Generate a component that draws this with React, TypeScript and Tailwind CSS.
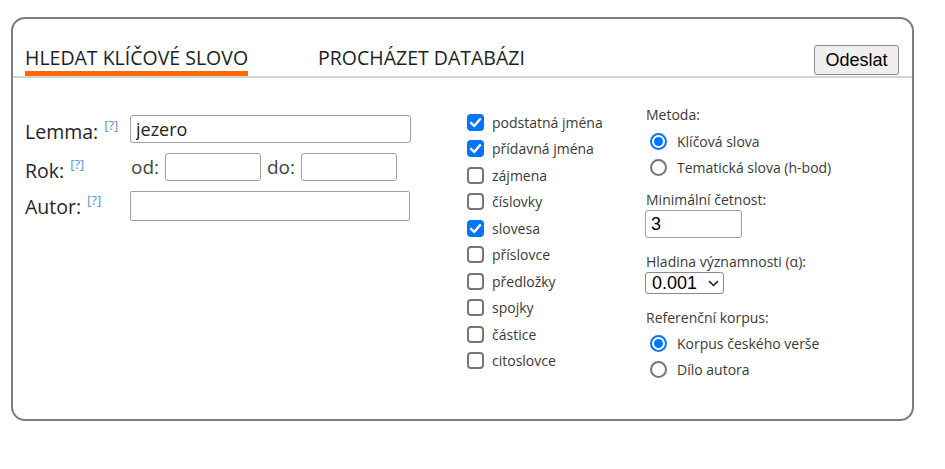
import React from "react";

const OS = { fontFamily: '"Open Sans", "Noto Sans", sans-serif' };

function Help() {
  return (
    <sup className="relative -top-[9px] ml-[6px] text-[13px] font-normal leading-none text-[#5a92d2]">[?]</sup>
  );
}

function CheckMark() {
  return (
    <svg width="17" height="17" viewBox="0 0 17 17" className="block">
      <path d="M4 8.8 L7.2 12 L13 5.2" fill="none" stroke="white" strokeWidth="2.4" strokeLinecap="round" strokeLinejoin="round" />
    </svg>
  );
}

function Check({ label, checked }: { label: string; checked?: boolean }) {
  return (
    <label className="flex h-[26.5px] items-center">
      {checked ? (
        <span className="h-[17px] w-[17px] rounded-[4px] bg-[#0075ff]">
          <CheckMark />
        </span>
      ) : (
        <span className="h-[17px] w-[17px] rounded-[4px] border-2 border-[#767676] bg-white" />
      )}
      <span className="ml-[8px] text-[14px] text-[#3a3a3a]">{label}</span>
    </label>
  );
}

function Radio({ label, checked }: { label: string; checked?: boolean }) {
  return (
    <label className="flex h-[26px] items-center pl-[5px]">
      {checked ? (
        <span className="flex h-[17px] w-[17px] items-center justify-center rounded-full border-2 border-[#0075ff] bg-white">
          <span className="h-[9px] w-[9px] rounded-full bg-[#0075ff]" />
        </span>
      ) : (
        <span className="h-[17px] w-[17px] rounded-full border-2 border-[#767676] bg-white" />
      )}
      <span className="ml-[10px] text-[14px] text-[#3a3a3a]">{label}</span>
    </label>
  );
}

export default function App() {
  const pos = [
    ["podstatná jména", true],
    ["přídavná jména", true],
    ["zájmena", false],
    ["číslovky", false],
    ["slovesa", true],
    ["příslovce", false],
    ["předložky", false],
    ["spojky", false],
    ["částice", false],
    ["citoslovce", false],
  ] as const;

  return (
    <div className="h-[469px] w-[945px] bg-white pl-[11px] pt-[17px]" style={OS}>
      <div className="h-[404px] w-[903px] rounded-[14px] border-2 border-[#7d7d7d]">
        {/* header */}
        <div className="flex h-[59px] items-end border-b-2 border-[#d4d4d4] pl-[12px] pr-[13px]">
          <div className="border-b-[5px] border-[#ff6a00] text-[19.5px] leading-[26px] text-[#1e1e1e]">
            HLEDAT KLÍČOVÉ SLOVO
          </div>
          <div className="ml-[70px] border-b-[5px] border-transparent text-[19.5px] leading-[26px] text-[#1e1e1e]">
            PROCHÁZET DATABÁZI
          </div>
          <button
            className="mb-[1px] ml-auto h-[30px] w-[85px] rounded-[3px] border border-[#8a8a8a] bg-[#efefef] text-[18px] text-black"
            style={{ fontFamily: '"Liberation Sans", Arial, sans-serif' }}
          >
            Odeslat
          </button>
        </div>

        {/* body */}
        <div className="flex items-start pl-[12px]">
          {/* left */}
          <div className="mt-[37px] w-[442px] text-[19.5px] text-[#262626]">
            <div className="flex h-[28px] items-center">
              <div className="w-[105px] pt-[6px]">
                Lemma:<Help />
              </div>
              <input
                defaultValue="jezero"
                className="h-[28px] w-[281px] rounded-[3px] border border-[#a0a0a0] px-[5px] text-[18px] text-[#222] outline-none"
              />
            </div>
            <div className="mt-[10px] flex h-[28px] items-center">
              <div className="w-[105px] pt-[7px]">
                Rok:<Help />
              </div>
              <span className="w-[35px] pl-[1px] text-[19px] text-[#444]">od:</span>
              <input className="h-[28px] w-[96px] rounded-[3px] border border-[#a0a0a0] outline-none" />
              <span className="ml-[6px] w-[34px] text-[19px] text-[#444]">do:</span>
              <input className="h-[28px] w-[96px] rounded-[3px] border border-[#a0a0a0] outline-none" />
            </div>
            <div className="mt-[10px] flex h-[30px] items-center">
              <div className="w-[105px] pt-[2px]">
                Autor:<Help />
              </div>
              <input className="h-[30px] w-[280px] rounded-[2px] border border-[#a0a0a0] outline-none" />
            </div>
          </div>

          {/* middle */}
          <div className="mt-[31px] flex w-[178px] flex-col">
            {pos.map(([l, c]) => (
              <Check key={l} label={l} checked={c} />
            ))}
          </div>

          {/* right */}
          <div className="mt-[27px] flex flex-col text-[14px] text-[#3a3a3a]">
            <div className="pl-[1px] leading-[20px]">Metoda:</div>
            <div className="mt-[3px]">
              <Radio label="Klíčová slova" checked />
              <Radio label="Tematická slova (h-bod)" />
            </div>
            <div className="mt-[10px] pl-[1px] leading-[20px]">Minimální četnost:</div>
            <input
              defaultValue="3"
              className="h-[28px] w-[97px] rounded-[3px] border border-[#a0a0a0] px-[5px] text-[18px] text-black outline-none"
              style={{ fontFamily: '"Liberation Sans", Arial, sans-serif' }}
            />
            <div className="mt-[14px] pl-[1px] leading-[20px]">Hladina významnosti (α):</div>
            <div className="relative h-[22px] w-[79px]">
              <select
                className="h-[22px] w-[79px] appearance-none rounded-[3px] border border-[#8a8a8a] bg-white pl-[6px] text-[18px] leading-[20px] text-black outline-none"
                style={{ fontFamily: '"Liberation Sans", Arial, sans-serif' }}
                defaultValue="0.001"
              >
                <option>0.001</option>
                <option>0.01</option>
                <option>0.05</option>
              </select>
              <svg
                className="pointer-events-none absolute left-[63px] top-[8px]"
                width="11"
                height="7"
                viewBox="0 0 11 7"
              >
                <path d="M1 1.2 L5.5 5.5 L10 1.2" fill="none" stroke="#222" strokeWidth="1.6" />
              </svg>
            </div>
            <div className="mt-[14px] pl-[1px] leading-[20px]">Referenční korpus:</div>
            <div className="mt-[2px]">
              <Radio label="Korpus českého verše" checked />
              <Radio label="Dílo autora" />
            </div>
          </div>
        </div>
      </div>
    </div>
  );
}
